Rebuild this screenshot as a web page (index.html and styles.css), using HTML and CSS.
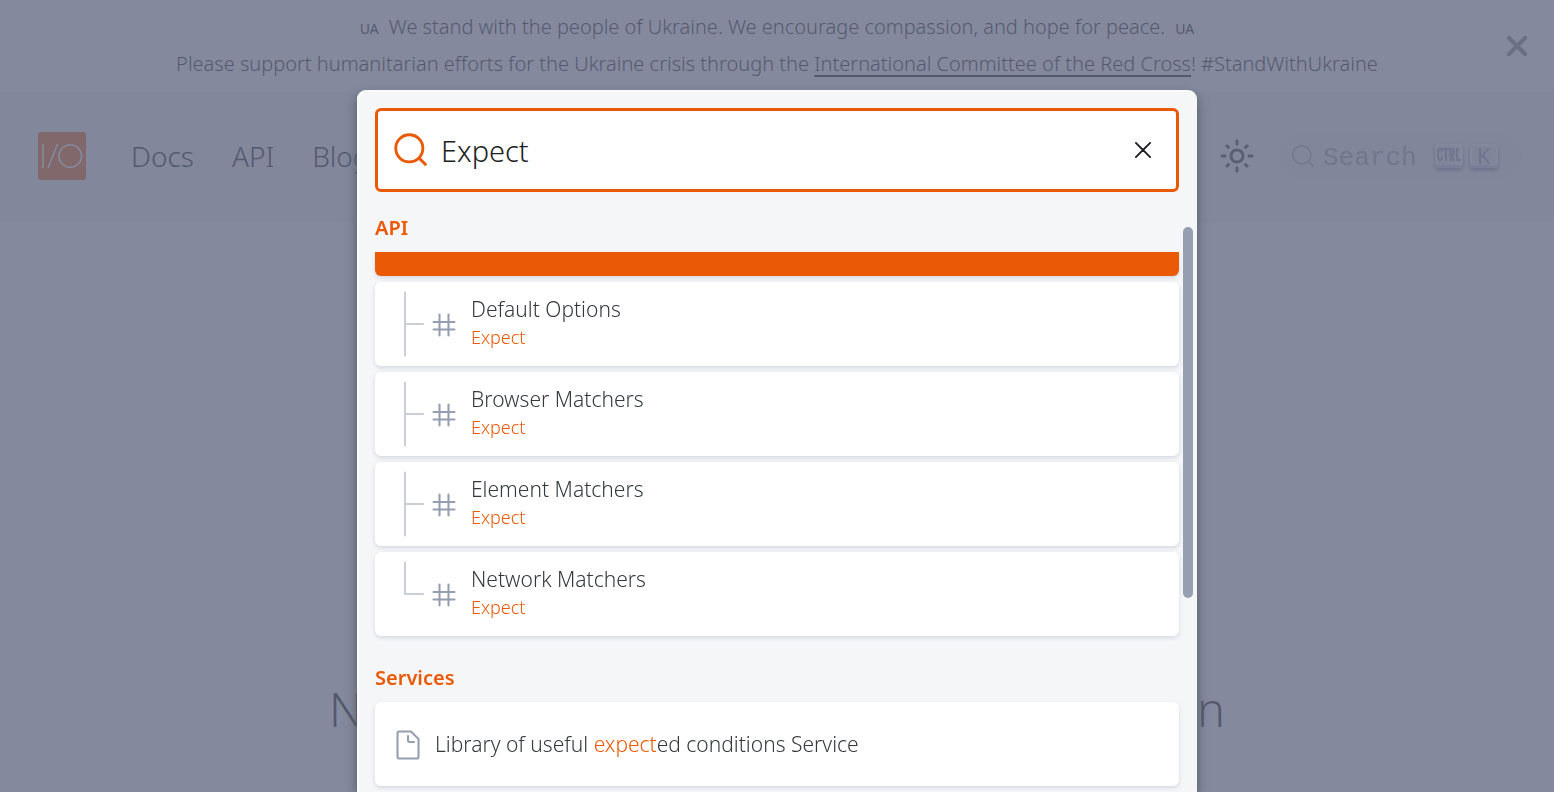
FILE: index.html
```html
<!DOCTYPE html>
<html lang="en">
<head>
<meta charset="utf-8">
<title>WebdriverIO</title>
<link rel="stylesheet" href="styles.css">
</head>
<body>
<div class="page">
  <div class="banner">
    <div class="banner-text">
      <p><span class="flag">UA</span><span>We stand with the people of Ukraine. We encourage compassion, and hope for peace.</span><span class="flag">UA</span></p>
      <p>Please support humanitarian efforts for the Ukraine crisis through the <a href="#redcross">International Committee of the Red Cross</a>! #StandWithUkraine</p>
    </div>
    <button class="banner-close" aria-label="Close banner">
      <svg width="22" height="22" viewBox="0 0 22 22"><path d="M3 3l16 16M19 3L3 19" stroke="currentColor" stroke-width="4.2" stroke-linecap="round"/></svg>
    </button>
  </div>
  <nav class="navbar">
    <a class="logo" href="#home" aria-label="WebdriverIO">
      <svg width="48" height="48" viewBox="0 0 48 48" fill="none"><rect width="48" height="48" rx="3" fill="#ea5906"/><path d="M5 12v24M19.500 12L10 36" stroke="#fff" stroke-width="1.600"/><circle cx="32.300" cy="24" r="11.300" stroke="#fff" stroke-width="1.600"/></svg>
    </a>
    <div class="nav-links"><a href="#docs">Docs</a><a href="#api">API</a><a href="#blog">Blog</a></div>
    <button class="theme" aria-label="Switch theme">
      <svg width="36" height="36" viewBox="0 0 24 24"><path fill="currentColor" d="M12,9c1.650,0,3,1.350,3,3s-1.350,3-3,3s-3-1.350-3-3S10.350,9,12,9 M12,7c-2.760,0-5,2.240-5,5s2.240,5,5,5s5-2.240,5-5 S14.760,7,12,7L12,7z M2,13l2,0c0.550,0,1-0.450,1-1s-0.450-1-1-1l-2,0c-0.550,0-1,0.450-1,1S1.450,13,2,13z M20,13l2,0c0.550,0,1-0.450,1-1 s-0.450-1-1-1l-2,0c-0.550,0-1,0.450-1,1S19.450,13,20,13z M11,2v2c0,0.550,0.450,1,1,1s1-0.450,1-1V2c0-0.550-0.450-1-1-1S11,1.450,11,2z M11,20v2c0,0.550,0.450,1,1,1s1-0.450,1-1v-2c0-0.550-0.450-1-1-1C11.450,19,11,19.450,11,20z M5.990,4.580c-0.390-0.390-1.030-0.390-1.410,0 c-0.390,0.390-0.390,1.030,0,1.410l1.060,1.060c0.390,0.390,1.030,0.390,1.410,0s0.390-1.030,0-1.410L5.990,4.580z M18.360,16.950 c-0.390-0.390-1.030-0.390-1.410,0c-0.390,0.390-0.390,1.030,0,1.410l1.060,1.060c0.390,0.390,1.030,0.390,1.410,0c0.390-0.390,0.390-1.030,0-1.410 L18.360,16.950z M19.420,5.990c0.390-0.390,0.390-1.030,0-1.410c-0.390-0.390-1.030-0.390-1.410,0l-1.060,1.060c-0.390,0.390-0.390,1.030,0,1.410 s1.030,0.390,1.410,0L19.420,5.990z M7.050,18.360c0.390-0.390,0.390-1.030,0-1.410c-0.390-0.390-1.030-0.390-1.410,0l-1.060,1.060 c-0.390,0.390-0.390,1.030,0,1.410s1.030,0.390,1.410,0L7.050,18.360z"/></svg>
    </button>
    <button class="search-button">
      <svg width="24" height="24" viewBox="0 0 20 20"><path d="M14.386 14.386l4.088 4.088-4.088-4.088c-2.942 2.942-7.711 2.942-10.653 0s-2.942-7.711 0-10.653 7.711-2.942 10.653 0 2.942 7.711 0 10.653z" stroke="currentColor" fill="none" stroke-width="1.200" stroke-linecap="round"/></svg>
      <span class="search-label">Search</span>
      <kbd class="ctrl"><svg width="24" height="13" viewBox="0 0 24 13" fill="none" stroke="currentColor" stroke-width="2"><path d="M5 4V3Q5 1 3 1T1 3v7q0 2 2 2t2-2V9M6 1h6M9 1v12M13.500 13V1h1.500q2 0 2 3t-2 3h-1l3 6M20 0v12h4"/></svg></kbd>
      <kbd>K</kbd>
    </button>
  </nav>
  <main class="hero"><h1><span>N</span><span>n</span></h1></main>
</div>
<div class="overlay">
  <div class="modal" role="dialog" aria-label="Search">
    <form class="search-form">
      <label for="query" aria-label="Search"><svg width="36" height="36" viewBox="0 0 20 20"><path d="M14.386 14.386l4.088 4.088-4.088-4.088c-2.942 2.942-7.711 2.942-10.653 0s-2.942-7.711 0-10.653 7.711-2.942 10.653 0 2.942 7.711 0 10.653z" stroke="currentColor" fill="none" stroke-width="1.600" stroke-linecap="round"/></svg></label>
      <input id="query" type="text" value="Expect">
      <button type="reset" class="clear" aria-label="Clear the query"><svg width="30" height="30" viewBox="0 0 20 20"><path d="M10 10l5.090-5.090L10 10l5.090 5.090L10 10zm0 0L4.910 4.910 10 10l-5.090 5.090L10 10z" stroke="currentColor" fill="none" stroke-width="1.200" stroke-linecap="round"/></svg></button>
    </form>
    <div class="results">
      <section>
        <h2>API</h2>
        <ul>
          <li><a class="selected" href="#expect" aria-label="Selected result"></a></li>
          <li><a class="hit" href="#default"><svg class="tree" viewBox="0 0 24 54"><path d="M8 6v42M20 27H8.300"/></svg><svg class="hash" viewBox="0 0 20 20"><path d="M13 13h4-4V8H7v5h6v4-4H7V8H3h4V3v5h6V3v5h4-4v5zm-6 0v4-4H3h4z"/></svg><span class="content"><span class="title">Default Options</span><span class="path">Expect</span></span></a></li>
          <li><a class="hit" href="#browser"><svg class="tree" viewBox="0 0 24 54"><path d="M8 6v42M20 27H8.300"/></svg><svg class="hash" viewBox="0 0 20 20"><path d="M13 13h4-4V8H7v5h6v4-4H7V8H3h4V3v5h6V3v5h4-4v5zm-6 0v4-4H3h4z"/></svg><span class="content"><span class="title">Browser Matchers</span><span class="path">Expect</span></span></a></li>
          <li><a class="hit" href="#element"><svg class="tree" viewBox="0 0 24 54"><path d="M8 6v42M20 27H8.300"/></svg><svg class="hash" viewBox="0 0 20 20"><path d="M13 13h4-4V8H7v5h6v4-4H7V8H3h4V3v5h6V3v5h4-4v5zm-6 0v4-4H3h4z"/></svg><span class="content"><span class="title">Element Matchers</span><span class="path">Expect</span></span></a></li>
          <li><a class="hit" href="#network"><svg class="tree" viewBox="0 0 24 54"><path d="M8 6v21M20 27H8.300"/></svg><svg class="hash" viewBox="0 0 20 20"><path d="M13 13h4-4V8H7v5h6v4-4H7V8H3h4V3v5h6V3v5h4-4v5zm-6 0v4-4H3h4z"/></svg><span class="content"><span class="title">Network Matchers</span><span class="path">Expect</span></span></a></li>
        </ul>
      </section>
      <section>
        <h2>Services</h2>
        <ul>
          <li><a class="hit" href="#service"><svg class="doc" viewBox="0 0 20 20"><path d="M17 6v12c0 .52-.2 1-1 1H4c-.7 0-1-.33-1-1V2c0-.55.42-1 1-1h8l5 5zM14 8h-3.130c-.51 0-.87-.34-.87-.87V4"/></svg><span class="content single"><span class="title">Library of useful <mark>expect</mark>ed conditions Service</span></span></a></li>
        </ul>
      </section>
      <div class="scroll-thumb"></div>
    </div>
  </div>
</div>
</body>
</html>
```
FILE: styles.css
```css
* { box-sizing: border-box; }
body {
  margin: 0;
  overflow: hidden;
  background: #fff;
  color: #1c1e21;
  font: 300 20px/37px "Noto Sans", "Open Sans", sans-serif;
}
a { color: inherit; text-decoration: none; }
button { border: 0; padding: 0; background: none; color: inherit; font: inherit; }
p, h1, h2, ul { margin: 0; padding: 0; }
ul { list-style: none; }
svg { display: block; flex: none; }

.page { height: 100vh; overflow: hidden; color: #0c0e12; }
.banner { position: relative; height: 92px; padding-top: 8px; text-align: center; }
.banner a { text-decoration: underline; text-decoration-thickness: 2px; text-underline-offset: 4px; }
.flag { margin: 0 10px; font-size: 14px; line-height: 14px; font-weight: 400; }
.banner-close { position: absolute; top: 35px; right: 26px; color: #7d7f82; }

.navbar {
  display: flex;
  align-items: center;
  height: 130px;
  padding: 0 32px 2px 38px;
  background: #f2f4f6;
}
.nav-links { display: flex; flex: 1; gap: 38px; margin-left: 45px; font-size: 28px; }
.theme { margin-right: 25px; color: #1c1e21; opacity: .9; }
.search-button {
  display: flex;
  align-items: center;
  height: 44px;
  width: 242px;
  padding: 0 11px;
  border-radius: 22px;
  background: #eff1f3;
  color: #969faf;
}
.search-label { margin: 0 18px 0 8px; padding-top: 3px; font: 26px/44px "Liberation Mono", monospace; }
kbd {
  display: flex;
  align-items: center;
  justify-content: center;
  width: 28px;
  height: 24px;
  margin-right: 7px;
  padding-bottom: 3px;
  border-radius: 4px;
  background: linear-gradient(-225deg, #d5dbe4, #f8f8f8);
  box-shadow: inset 0 -3px 0 0 #cdcde6, inset 0 0 2px 2px #fff, 0 2px 3px 1px rgba(30, 35, 90, .4);
  font: 400 22px/24px "Noto Sans", sans-serif;
}

.hero { padding-top: 457px; }
.hero h1 {
  display: flex;
  justify-content: space-between;
  max-width: 896px;
  margin: 0 auto;
  font-size: 47px;
  line-height: 60px;
  font-weight: 300;
}

.overlay {
  position: fixed;
  inset: 0;
  padding-top: 90px;
  background: rgba(101, 108, 133, .8);
}
.modal {
  display: flex;
  flex-direction: column;
  max-width: 840px;
  height: calc(100vh - 90px);
  margin: 0 auto;
  padding: 18px 18px 0;
  border-radius: 9px 9px 0 0;
  background: #f5f6f7;
  box-shadow: inset 2px 2px 0 0 rgba(255, 255, 255, .5), 0 5px 12px 0 #555a64;
}
.search-form {
  display: flex;
  align-items: center;
  flex: none;
  height: 84px;
  padding: 0 18px 0 15px;
  border: 3px solid #ea5906;
  border-radius: 6px;
  background: #fff;
}
.search-form label { color: #ea5906; }
.search-form input {
  flex: 1;
  min-width: 0;
  height: 72px;
  padding: 0 0 0 12px;
  border: 0;
  outline: 0;
  background: none;
  color: #1c1e21;
  font: inherit;
  font-size: 29px;
}
.clear { color: #1c1e21; }
.results { position: relative; flex: 1; min-height: 0; padding-top: 12px; }
.results h2 { color: #ea5906; font-size: 20px; line-height: 48px; font-weight: 600; }
section { margin-bottom: 18px; }
li { margin-bottom: 6px; }
section li:last-child { margin-bottom: 0; }
.selected {
  display: block;
  height: 24px;
  border-radius: 0 0 6px 6px;
  background: #ea5906;
  box-shadow: 0 2px 4px 0 #d4d9e1;
}
.hit {
  display: flex;
  align-items: center;
  height: 84px;
  padding: 0 18px;
  border-radius: 6px;
  background: #fff;
  color: #34393f;
  box-shadow: 0 2px 4px 0 #d4d9e1;
}
.tree, .hash, .doc { fill: none; stroke: #969faf; stroke-linecap: round; stroke-linejoin: round; }
.tree { width: 36px; height: 84px; opacity: .5; stroke-width: 1.4; }
.hash, .doc { width: 30px; height: 30px; margin-top: 2px; stroke-width: 1.4; }
.content { display: flex; flex-direction: column; margin-left: 12px; padding-bottom: 4px; }
.single { padding: 0; }
.title { font-size: 21px; line-height: 30px; }
.path { color: #ea5906; font-size: 18px; line-height: 27px; }
mark { background: none; color: #ea5906; }
.scroll-thumb {
  position: absolute;
  top: 35px;
  right: -14px;
  width: 10px;
  height: 371px;
  border-radius: 5px;
  background: #969faf;
}
```
